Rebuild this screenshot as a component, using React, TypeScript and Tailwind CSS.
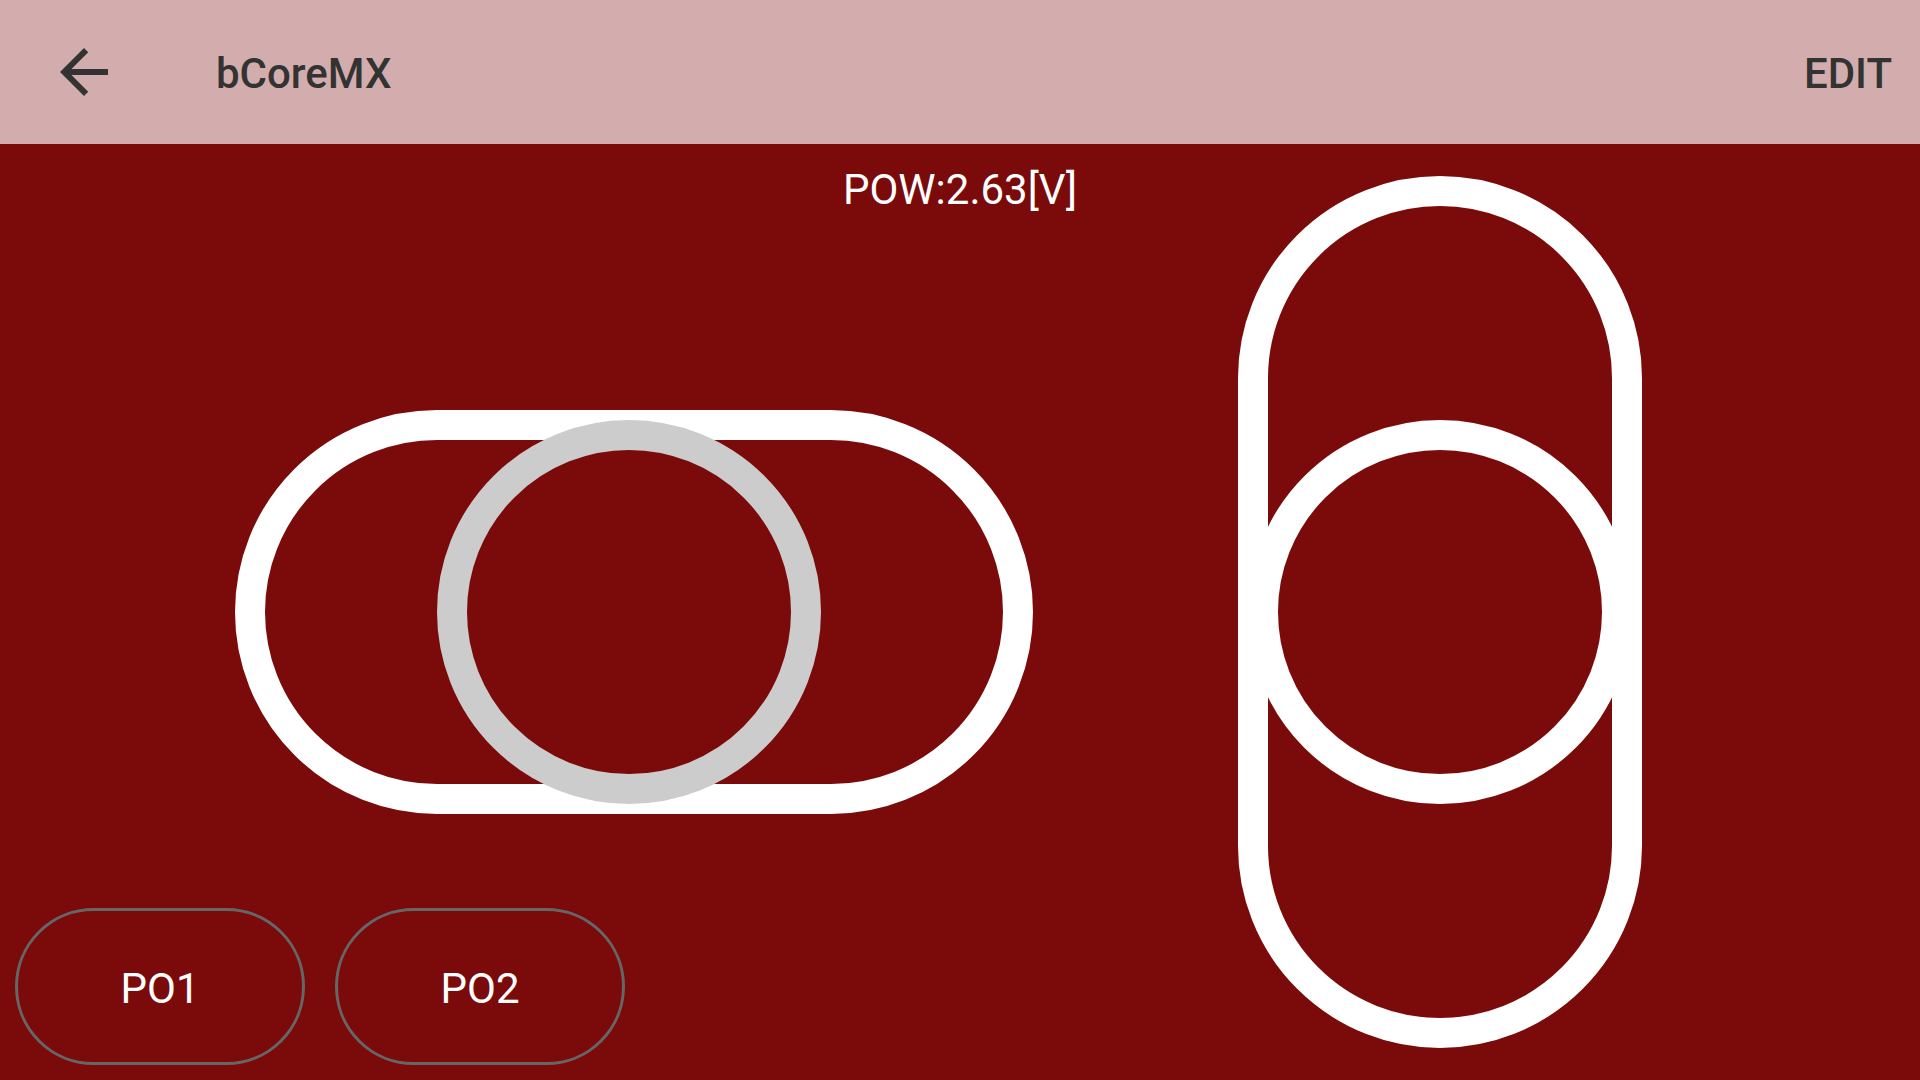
import { useState } from 'react';

const SLIDER_MAX = 254;

function HorizontalStick() {
  const [value, setValue] = useState(124);
  return (
    <div className="relative col-start-2 h-[404px] self-center rounded-full border-[30px] border-white">
      <div className="pointer-events-none absolute -inset-[30px] flex items-center">
        <div
          className="size-[384px] shrink-0 rounded-full border-[30px] border-[#cccccc]"
          style={{ marginLeft: `calc((100% - 384px) * ${value / SLIDER_MAX})` }}
        />
      </div>
      <input
        type="range"
        aria-label="Steering"
        min={0}
        max={SLIDER_MAX}
        value={value}
        onChange={(e) => setValue(Number(e.target.value))}
        className="absolute inset-0 size-full cursor-pointer opacity-0"
      />
    </div>
  );
}

function VerticalStick() {
  const [value, setValue] = useState(127);
  const above = SLIDER_MAX - value;
  return (
    <div className="relative col-start-4 rounded-full border-[30px] border-white">
      <div className="pointer-events-none absolute -inset-[30px] flex flex-col items-center">
        <div style={{ flexGrow: above }} />
        <div className="size-[384px] shrink-0 rounded-full border-[30px] border-white" />
        <div style={{ flexGrow: value }} />
      </div>
      <input
        type="range"
        aria-label="Throttle"
        min={0}
        max={SLIDER_MAX}
        value={value}
        onChange={(e) => setValue(Number(e.target.value))}
        className="absolute inset-0 size-full cursor-pointer opacity-0 [direction:rtl] [writing-mode:vertical-lr]"
      />
    </div>
  );
}

function PortButton({ label }: { label: string }) {
  return (
    <button
      type="button"
      className="h-[157px] w-[290px] cursor-pointer rounded-full border-[3px] border-[#666666] pt-1"
    >
      {label}
    </button>
  );
}

export default function App() {
  return (
    <div className="flex min-h-screen flex-col bg-[#7b0b0a] font-['Roboto',sans-serif] text-[42px] leading-[50px] text-white">
      <header className="flex h-36 shrink-0 items-center bg-[#d3adad] pr-7 pl-12 font-medium text-[#333333]">
        <button type="button" aria-label="Back" className="cursor-pointer">
          <svg viewBox="0 0 24 24" className="size-[72px]" fill="currentColor" aria-hidden="true">
            <path d="M20 11H7.83l5.59-5.59L12 4l-8 8 8 8 1.41-1.41L7.83 13H20v-2z" />
          </svg>
        </button>
        <h1 className="ml-24 pt-1">bCoreMX</h1>
        <button type="button" className="ml-auto cursor-pointer pt-1">
          EDIT
        </button>
      </header>

      <main className="grid grow grid-cols-1 grid-rows-1">
        <div className="col-start-1 row-start-1 grid grid-cols-[235fr_798px_205fr_404px_278fr] py-8">
          <HorizontalStick />
          <VerticalStick />
        </div>
        <p className="col-start-1 row-start-1 self-start justify-self-center pt-[21px]">POW:2.63[V]</p>
        <div className="col-start-1 row-start-1 flex gap-[30px] self-end justify-self-start pb-[15px] pl-[15px]">
          <PortButton label="PO1" />
          <PortButton label="PO2" />
        </div>
      </main>
    </div>
  );
}
